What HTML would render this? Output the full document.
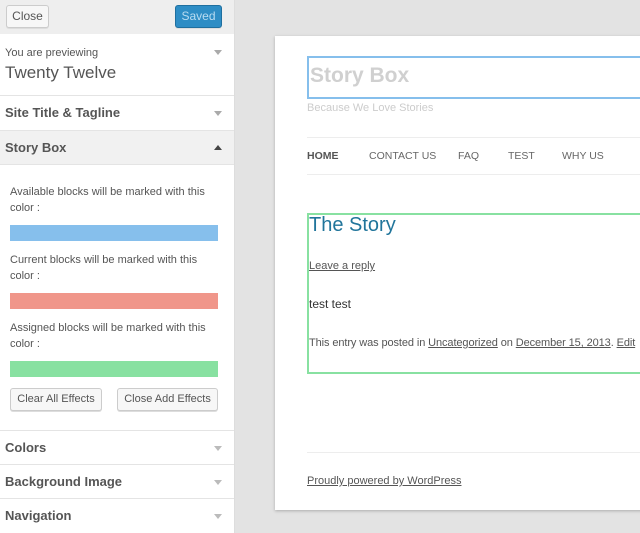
<!DOCTYPE html>
<html><head><style>
*{margin:0;padding:0;box-sizing:border-box}
body{width:640px;height:533px;overflow:hidden;background:#e3e3e3;font-family:"Liberation Sans",sans-serif;position:relative;color:#555}
.a{position:absolute}
#side{left:0;top:0;width:235px;height:533px;background:#fff;border-right:1px solid #ddd}
.btn{position:absolute;border:1px solid #ccc;background:#f7f7f7;border-radius:3px;font-size:11px;color:#555;text-align:center;box-shadow:0 1px 0 #ddd}
.sec{position:absolute;left:0;width:234px;border-top:1px solid #e4e4e4;font-weight:bold;font-size:13px;color:#555;padding-left:5px}
.arr{position:absolute;right:12px;width:0;height:0;border-left:4px solid transparent;border-right:4px solid transparent;border-top:5px solid #aaa}
.lbl{position:absolute;left:10px;font-size:11px;color:#555;line-height:16px;width:210px}
.bar{position:absolute;left:10px;width:208px;height:16px}
#page{left:275px;top:36px;width:380px;height:474px;background:#fff;box-shadow:0 1px 3px rgba(0,0,0,.25)}
.nav{position:absolute;font-size:10.5px;color:#666}
a{color:#555;text-decoration:underline}
</style></head><body>
<div id="side" class="a">
 <div class="a" style="left:0;top:0;width:234px;height:34px;background:#eee"></div>
 <div class="btn" style="left:6px;top:5px;width:43px;height:23px;line-height:21px;font-size:12px">Close</div>
 <div class="btn" style="left:175px;top:5px;width:47px;height:23px;line-height:21px;font-size:12px;background:#2e8dc5;border-color:#1f6f9f;color:#b9dcf1">Saved</div>
 <div class="a" style="left:5px;top:47px;font-size:11px;color:#555">You are previewing</div>
 <div class="a" style="left:5px;top:63px;font-size:17px;color:#555">Twenty Twelve</div>
 <div class="arr" style="top:50px"></div>
 <div class="sec" style="top:95px;height:35px;line-height:34px">Site Title &amp; Tagline<div class="arr" style="top:15px"></div></div>
 <div class="sec" style="top:130px;height:35px;line-height:33px;background:#f1f1f1;border-bottom:1px solid #e4e4e4">Story Box<div class="arr" style="top:14px;border-top:0;border-bottom:5px solid #444"></div></div>
 <div class="lbl" style="top:184px">Available blocks will be marked with this color :</div>
 <div class="bar" style="top:225px;background:#86bfec"></div>
 <div class="lbl" style="top:252px">Current blocks will be marked with this color :</div>
 <div class="bar" style="top:293px;background:#f0968a"></div>
 <div class="lbl" style="top:320px">Assigned blocks will be marked with this color :</div>
 <div class="bar" style="top:361px;background:#88e1a1"></div>
 <div class="btn" style="left:10px;top:388px;width:92px;height:23px;line-height:21px">Clear All Effects</div>
 <div class="btn" style="left:117px;top:388px;width:101px;height:23px;line-height:21px">Close Add Effects</div>
 <div class="sec" style="top:430px;height:34px;line-height:33px">Colors<div class="arr" style="top:15px;border-top-color:#bbb"></div></div>
 <div class="sec" style="top:464px;height:34px;line-height:33px">Background Image<div class="arr" style="top:15px;border-top-color:#bbb"></div></div>
 <div class="sec" style="top:498px;height:35px;line-height:33px">Navigation<div class="arr" style="top:15px;border-top-color:#bbb"></div></div>
</div>
<div id="page" class="a">
 <div class="a" style="left:32px;top:20px;width:360px;height:43px;border:2px solid #86bfec"></div>
 <div class="a" style="left:35px;top:28px;font-size:21px;font-weight:bold;color:#d0d0d0">Story Box</div>
 <div class="a" style="left:32px;top:66px;font-size:11px;color:#ccc">Because We Love Stories</div>
 <div class="a" style="left:32px;top:101px;width:360px;border-top:1px solid #ededed"></div>
 <div class="nav" style="left:32px;top:114px;font-weight:bold;color:#555">HOME</div>
 <div class="nav" style="left:94px;top:114px">CONTACT US</div>
 <div class="nav" style="left:183px;top:114px">FAQ</div>
 <div class="nav" style="left:233px;top:114px">TEST</div>
 <div class="nav" style="left:287px;top:114px">WHY US</div>
 <div class="a" style="left:32px;top:138px;width:360px;border-top:1px solid #ededed"></div>
 <div class="a" style="left:32px;top:177px;width:360px;height:161px;border:2px solid #88e1a1"></div>
 <div class="a" style="left:34px;top:178px;font-size:20px;color:#21759b">The Story</div>
 <div class="a" style="left:34px;top:224px;font-size:11px"><a>Leave a reply</a></div>
 <div class="a" style="left:34px;top:261px;font-size:12px;color:#333">test test</div>
 <div class="a" style="left:34px;top:301px;font-size:11px;white-space:nowrap;letter-spacing:-0.1px">This entry was posted in <a>Uncategorized</a> on <a>December 15, 2013</a>. <a>Edit</a></div>
 <div class="a" style="left:32px;top:416px;width:360px;border-top:1px solid #ededed"></div>
 <div class="a" style="left:32px;top:439px;font-size:11px"><a>Proudly powered by WordPress</a></div>
</div>
</body></html>
